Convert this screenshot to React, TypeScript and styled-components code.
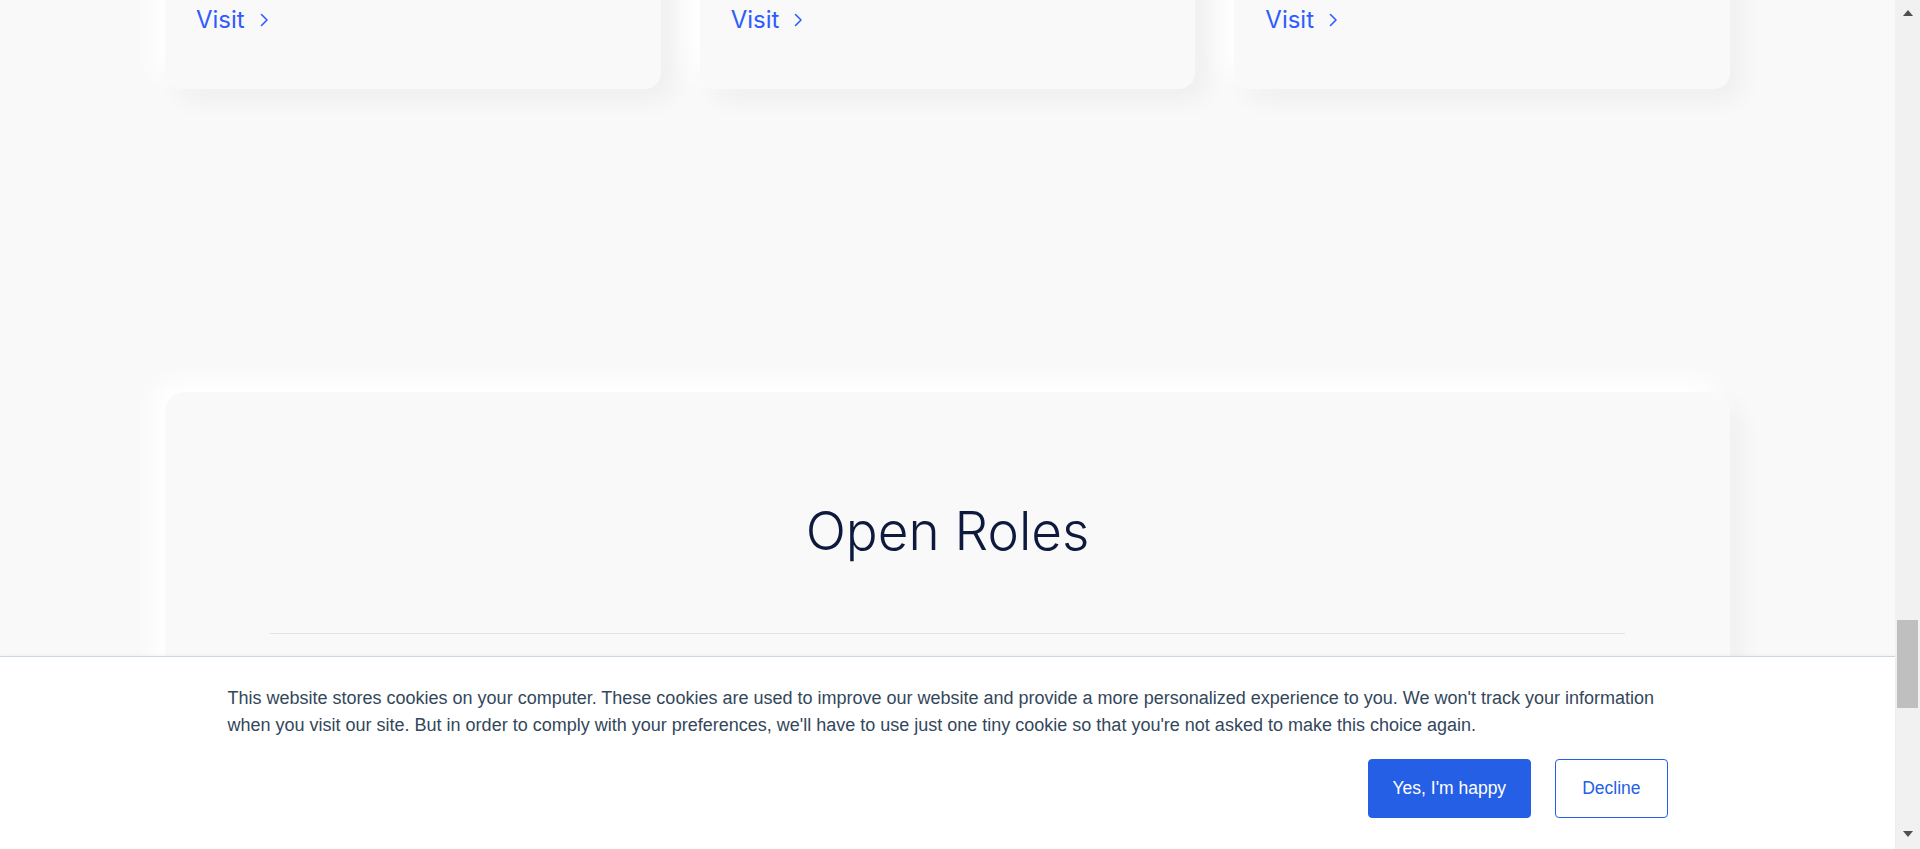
import React, { useLayoutEffect, useRef } from 'react';
import styled, { createGlobalStyle } from 'styled-components';

const GlobalStyle = createGlobalStyle`
  html, body {
    margin: 0;
    padding: 0;
    background: #f9f9f9;
    overflow: hidden;
  }
  body {
    font-family: Inter, 'Open Sans', sans-serif;
  }
`;

const Viewport = styled.div`
  display: flex;
  height: 100vh;
`;

const Screen = styled.div`
  flex: 1;
  position: relative;
  min-width: 0;
`;

const ScrollArea = styled.div`
  height: 100%;
  overflow: hidden;
  background: #f9f9f9;
`;

const Page = styled.div`
  display: flex;
  flex-direction: column;
  align-items: center;
  padding-bottom: 600px;
`;

const Container = styled.div`
  width: 1565px;
  display: flex;
  flex-direction: column;
`;

const CardGrid = styled.div`
  display: grid;
  grid-template-columns: repeat(3, 1fr);
  gap: 39px;
`;

const Card = styled.div`
  height: 420px;
  box-sizing: border-box;
  padding: 40px 31px 53px;
  display: flex;
  flex-direction: column;
  justify-content: flex-end;
  background: #f9f9f9;
  border-radius: 16px;
  box-shadow: -12px -12px 24px #ffffff, 12px 12px 24px rgba(0, 0, 0, 0.045);
`;

const VisitLink = styled.a`
  display: inline-flex;
  align-items: center;
  gap: 14px;
  font-family: Inter, sans-serif;
  font-size: 24px;
  line-height: 32px;
  font-weight: 400;
  color: #2f5cff;
  text-decoration: none;
`;

const RolesCard = styled.section`
  margin-top: 303px;
  height: 1100px;
  box-sizing: border-box;
  padding: 104px 105px 0;
  background: #f9f9f9;
  border-radius: 20px;
  box-shadow: -12px -12px 24px #ffffff, 12px 12px 24px rgba(0, 0, 0, 0.045);
  display: flex;
  flex-direction: column;
  align-items: center;
`;

const RolesTitle = styled.h2`
  margin: 0;
  font-family: Inter, sans-serif;
  font-weight: 300;
  font-size: 53px;
  line-height: 70px;
  color: #0e1a3d;
`;

const Divider = styled.hr`
  width: 100%;
  margin: 67px 0 0;
  border: none;
  border-top: 1px solid #e2e2e2;
`;

const Banner = styled.div`
  position: absolute;
  left: 0;
  right: 0;
  bottom: 0;
  height: 193px;
  box-sizing: border-box;
  background: #ffffff;
  border-top: 1px solid #cbd6e2;
  box-shadow: 0 -1px 3px rgba(0, 0, 0, 0.04);
  display: flex;
  justify-content: center;
  padding-top: 28px;
`;

const BannerInner = styled.div`
  width: 1440px;
  display: flex;
  flex-direction: column;
  gap: 20px;
`;

const BannerText = styled.p`
  margin: 0;
  font-family: 'Liberation Sans', Arial, sans-serif;
  font-size: 18px;
  line-height: 27px;
  color: #33475b;
`;

const Actions = styled.div`
  display: flex;
  justify-content: flex-end;
  gap: 24px;
`;

const Button = styled.button<{ $primary?: boolean }>`
  height: 59px;
  box-sizing: border-box;
  padding: 0 ${(p) => (p.$primary ? '24px' : '26px')};
  border-radius: 4px;
  border: 1px solid #245fe5;
  background: ${(p) => (p.$primary ? '#245fe5' : '#ffffff')};
  color: ${(p) => (p.$primary ? '#ffffff' : '#245fe5')};
  font-family: 'Liberation Sans', Arial, sans-serif;
  font-size: 17.5px;
  font-weight: 400;
  cursor: pointer;
`;

const ScrollBar = styled.div`
  width: 25px;
  flex-shrink: 0;
  display: flex;
  flex-direction: column;
  background: #f1f1f1;
`;

const ScrollButton = styled.div<{ $down?: boolean }>`
  height: 25px;
  display: flex;
  justify-content: center;
  align-items: ${(p) => (p.$down ? 'flex-start' : 'flex-end')};
  padding: ${(p) => (p.$down ? '7px 0 0' : '0 0 9px')};
  box-sizing: border-box;

  &::before {
    content: '';
    width: 0;
    height: 0;
    margin-left: 1px;
    border-left: 5.5px solid transparent;
    border-right: 5.5px solid transparent;
    ${(p) => (p.$down ? 'border-top: 6px solid #505050;' : 'border-bottom: 6px solid #505050;')}
  }
`;

const ScrollTrack = styled.div`
  flex: 1;
  padding: 0 2px;
`;

const ScrollThumb = styled.div<{ $top: number; $size: number }>`
  margin-top: ${(p) => p.$top}px;
  height: ${(p) => p.$size}px;
  background: #bfbfbf;
`;

const Chevron = () => (
  <svg width="10" height="14" viewBox="0 0 10 14" fill="none">
    <path d="M2.5 1.5 L8 7 L2.5 12.5" stroke="currentColor" strokeWidth="1.6" strokeLinecap="round" strokeLinejoin="round" />
  </svg>
);

const App = () => {
  const scrollRef = useRef<HTMLDivElement>(null);

  useLayoutEffect(() => {
    if (scrollRef.current) scrollRef.current.scrollTop = 331;
  }, []);

  return (
    <>
      <GlobalStyle />
      <Viewport>
        <Screen>
          <ScrollArea ref={scrollRef}>
            <Page>
              <Container>
                <CardGrid>
                  {[0, 1, 2].map((i) => (
                    <Card key={i}>
                      <VisitLink href="#">
                        Visit <Chevron />
                      </VisitLink>
                    </Card>
                  ))}
                </CardGrid>
                <RolesCard>
                  <RolesTitle>Open Roles</RolesTitle>
                  <Divider />
                </RolesCard>
              </Container>
            </Page>
          </ScrollArea>
          <Banner>
            <BannerInner>
              <BannerText>
                This website stores cookies on your computer. These cookies are used to improve our website and provide
                a more personalized experience to you. We won't track your information when you visit our site. But in
                order to comply with your preferences, we'll have to use just one tiny cookie so that you're not asked to
                make this choice again.
              </BannerText>
              <Actions>
                <Button $primary>Yes, I'm happy</Button>
                <Button>Decline</Button>
              </Actions>
            </BannerInner>
          </Banner>
        </Screen>
        <ScrollBar>
          <ScrollButton />
          <ScrollTrack>
            <ScrollThumb $top={595} $size={88} />
          </ScrollTrack>
          <ScrollButton $down />
        </ScrollBar>
      </Viewport>
    </>
  );
};

export default App;
